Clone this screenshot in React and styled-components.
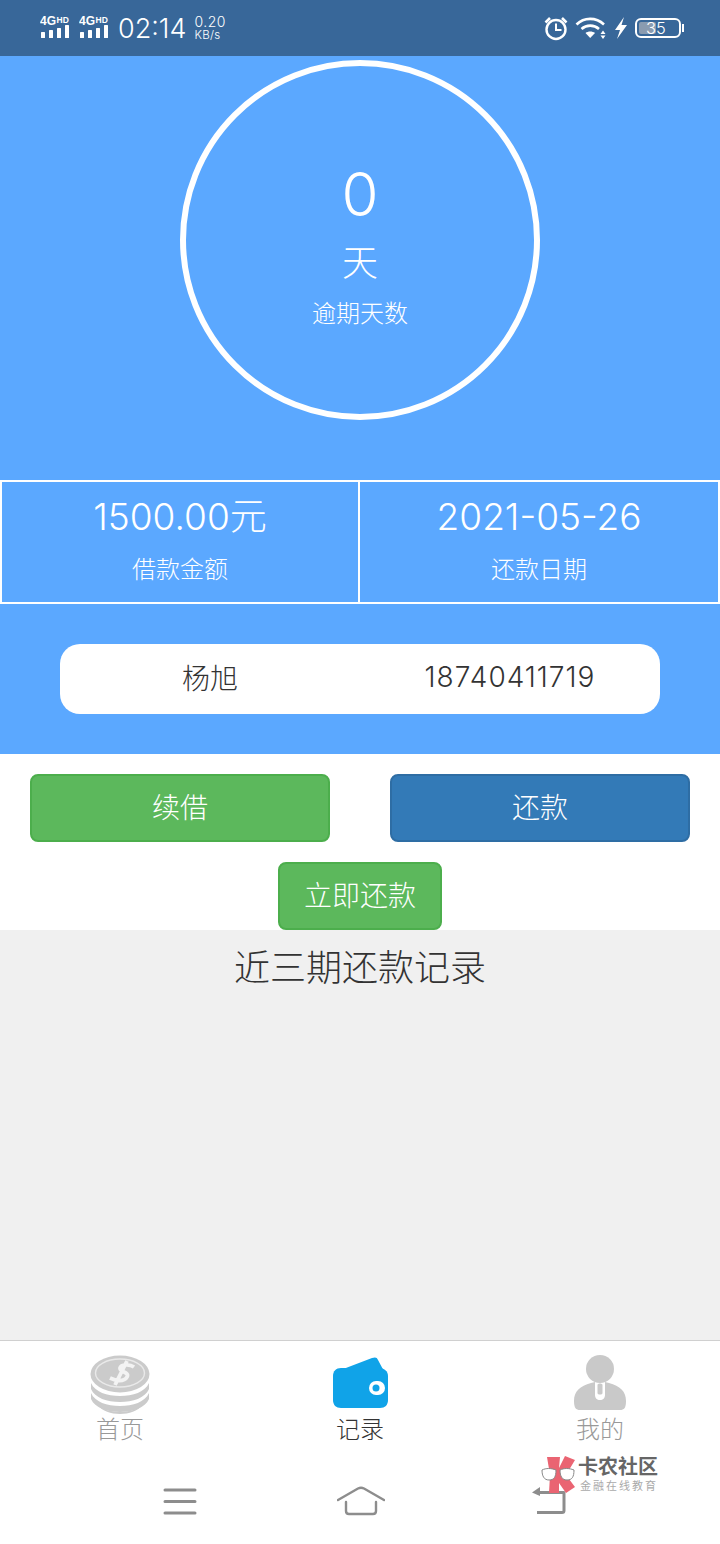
import React from "react";
import styled, { createGlobalStyle } from "styled-components";

const GlobalStyle = createGlobalStyle`
  html, body {
    margin: 0;
    padding: 0;
    background: #fff;
    font-family: Inter, "Noto Sans CJK SC", sans-serif;
  }
  * { box-sizing: border-box; }
`;

function SignalIcon() {
  return (
    <svg width="31" height="26" viewBox="0 0 31 26">
      <text x="0" y="10" fill="#fff" fontSize="12" fontWeight="700" fontFamily="Liberation Sans, sans-serif">4G</text>
      <text x="16.500" y="7.500" fill="#fff" fontSize="8.500" fontWeight="700" fontFamily="Liberation Sans, sans-serif">HD</text>
      <rect x="1" y="17" width="4" height="6" rx="0.500" fill="#fff" />
      <rect x="9" y="15" width="4" height="8" rx="0.500" fill="#fff" />
      <rect x="17" y="13" width="4" height="10" rx="0.500" fill="#fff" />
      <rect x="25" y="10" width="4" height="13" rx="0.500" fill="#fff" />
    </svg>
  );
}

function AlarmIcon() {
  return (
    <svg width="26" height="26" viewBox="0 0 26 26" fill="none" stroke="#fff">
      <circle cx="13" cy="14.500" r="9.500" strokeWidth="2.400" />
      <path d="M13 8.500v6.500h5.500" strokeWidth="2" />
      <path d="M2.500 7.500 7 3M23.500 7.500 19 3" strokeWidth="2.600" />
    </svg>
  );
}

function WifiIcon() {
  return (
    <svg width="33" height="24" viewBox="0 0 33 24" fill="none" stroke="#fff" strokeWidth="2.600">
      <path d="M1.500 8.500C9 1 21 1 29 8.500" />
      <path d="M6.500 13C11.500 8.500 19 8.500 24 13" />
      <path d="M15.200 22 10.500 17C13 15 17.500 15 20 17Z" fill="#fff" stroke="none" />
      <path d="M28 14.500 30.500 18h-5ZM28 23 30.500 19.500h-5Z" fill="#fff" stroke="none" />
    </svg>
  );
}

function BoltIcon() {
  return (
    <svg width="14" height="24" viewBox="0 0 14 24">
      <path d="M10 1 1 14h5l-3 9 10-14H7.500Z" fill="#fff" />
    </svg>
  );
}

function CoinsIcon() {
  return (
    <svg width="60" height="60" viewBox="0 0 60 60">
      <ellipse cx="30" cy="19" rx="29.500" ry="18.500" fill="#cbcbcb" />
      <ellipse cx="30" cy="18" rx="24.500" ry="14" fill="none" stroke="#e9e9e9" strokeWidth="1.400" />
      <path d="M1 28c4 9 16 13 29 13s25-4 29-13v6c-4 9-16 13-29 13S5 43 1 34Z" fill="#cbcbcb" />
      <path d="M1 38c4 9 16 13 29 13s25-4 29-13v6c-4 9-16 13-29 13S5 53 1 44Z" fill="#cbcbcb" />
      <path d="M8 50c6 5 14 7 22 7s16-2 22-7c-4 6-13 9-22 9S12 56 8 50Z" fill="#cbcbcb" />
      <path d="M44 12c-4-3-13-3-14 1s10 4 7 9-11 4-17 1M37 6 25 30" fill="none" stroke="#f3f3f3" strokeWidth="3.800" />
    </svg>
  );
}

function WalletIcon() {
  return (
    <svg width="56" height="54" viewBox="0 -2 56 54">
      <path d="M6 14 40 1c3-1 5-1 6 2l8 15Z" fill="#10a3e8" />
      <path d="M1 19c0-5 3-8 8-8h38c5 0 9 3 9 8v24c0 5-3 8-8 8H9c-5 0-8-3-8-8Z" fill="#10a3e8" />
      <rect x="37" y="24" width="16" height="14" rx="7" fill="#fff" />
      <circle cx="44" cy="31" r="3.500" fill="#10a3e8" />
    </svg>
  );
}

function PersonIcon() {
  return (
    <svg width="54" height="56" viewBox="0 0 54 56">
      <circle cx="27" cy="14" r="14" fill="#c9c9c9" />
      <path d="M1 46c0-10 6-15 17-18l4-1v13c0 3 2 5 5 5s5-2 5-5V27l4 1c11 3 17 8 17 18 0 7-2 9-6 9H7c-4 0-6-2-6-9Z" fill="#c9c9c9" />
      <path d="M24.500 30c0-2 5-2 5 0v8c0 2-5 2-5 0Z" fill="#c9c9c9" />
    </svg>
  );
}

function MenuIcon() {
  return (
    <svg width="34" height="28" viewBox="0 0 34 28" fill="none" stroke="#8d8d8d" strokeWidth="3" strokeLinecap="round">
      <path d="M2 3h30M2 14.500h30M2 26h30" />
    </svg>
  );
}

function HomeIcon() {
  return (
    <svg width="48" height="30" viewBox="0 0 48 30" fill="none" stroke="#8d8d8d" strokeWidth="2.400" strokeLinecap="round" strokeLinejoin="round">
      <path d="M1 14 21 2.500c2-1 4-1 6 0L47 14" />
      <path d="M9 16v9c0 2 1 3 3 3h24c2 0 3-1 3-3v-9" />
    </svg>
  );
}

function BackIcon() {
  return (
    <svg width="36" height="30" viewBox="0 0 36 30" fill="none" stroke="#8d8d8d" strokeWidth="3" strokeLinejoin="round">
      <path d="M8 6.500h25v18c0 1.500-.5 2-2 2H6" />
      <path d="M9 1 1 6.500 9 10Z" fill="#8d8d8d" stroke="none" />
    </svg>
  );
}

function LogoMark() {
  return (
    <svg width="36" height="40" viewBox="0 0 36 40">
      <path d="M7 2h13l-1 11 6-12 10 4-9 15 9 12-9 6-7-10v10H9l1-18Z" fill="#ea6472" />
      <path d="M2 15c4-2 9-2 14 0 0 7-2 10-7 10s-7-4-7-10ZM20 15c4-2 9-2 14 0 0 7-2 10-7 10s-7-4-7-10Z" fill="#fff" stroke="#888" strokeWidth="1" />
    </svg>
  );
}

export default function App() {
  return (
    <>
      <GlobalStyle />
      <Page>
        <StatusBar>
          <StatusGroup>
            <SignalIcon />
            <SignalIcon />
            <Clock>02:14</Clock>
            <Speed>
              <span>0.20</span>
              <SpeedUnit>KB/s</SpeedUnit>
            </Speed>
          </StatusGroup>
          <StatusRight>
            <AlarmIcon />
            <WifiIcon />
            <BoltIcon />
            <Battery>
              <BatteryFill />
              <BatteryText>35</BatteryText>
              <BatteryTip />
            </Battery>
          </StatusRight>
        </StatusBar>

        <BluePanel>
          <Circle>
            <DayCount>0</DayCount>
            <DayUnit>天</DayUnit>
            <DayLabel>逾期天数</DayLabel>
          </Circle>

          <StatsRow>
            <StatCell>
              <StatValue>1500.00元</StatValue>
              <StatLabel>借款金额</StatLabel>
            </StatCell>
            <StatCell>
              <StatValue>2021-05-26</StatValue>
              <StatLabel>还款日期</StatLabel>
            </StatCell>
          </StatsRow>

          <InfoPill>
            <InfoText>杨旭</InfoText>
            <InfoText $spaced>18740411719</InfoText>
          </InfoPill>
        </BluePanel>

        <ActionArea>
          <ActionRow>
            <ActionButton $color="#5cb85c" $border="#4cae4c">续借</ActionButton>
            <ActionButton $color="#337ab7" $border="#2e6da4">还款</ActionButton>
          </ActionRow>
          <PayButton>立即还款</PayButton>
        </ActionArea>

        <Records>
          <RecordsTitle>近三期还款记录</RecordsTitle>
        </Records>

        <TabBar>
          <Tab>
            <TabIcon><CoinsIcon /></TabIcon>
            <TabLabel>首页</TabLabel>
          </Tab>
          <Tab>
            <TabIcon><WalletIcon /></TabIcon>
            <TabLabel $active>记录</TabLabel>
          </Tab>
          <Tab>
            <TabIcon><PersonIcon /></TabIcon>
            <TabLabel>我的</TabLabel>
          </Tab>
        </TabBar>

        <NavBar>
          <MenuIcon />
          <HomeIcon />
          <BackIcon />
          <Watermark>
            <LogoMark />
            <WatermarkText>
              <WatermarkName>卡农社区</WatermarkName>
              <WatermarkSub>金融在线教育</WatermarkSub>
            </WatermarkText>
          </Watermark>
        </NavBar>
      </Page>
    </>
  );
}

const Page = styled.div`
  width: 720px;
  height: 1544px;
  display: flex;
  flex-direction: column;
  background: #fff;
  overflow: hidden;
`;

const StatusBar = styled.div`
  height: 56px;
  background: #386799;
  color: #fff;
  display: flex;
  align-items: center;
  justify-content: space-between;
  padding: 0 39px 0 40px;
`;

const StatusGroup = styled.div`
  display: flex;
  align-items: center;
  gap: 8px;
`;

const StatusRight = styled.div`
  display: flex;
  align-items: center;
  gap: 6px;
`;

const Clock = styled.span`
  font-size: 27px;
  font-weight: 300;
`;

const Speed = styled.div`
  display: flex;
  flex-direction: column;
  font-size: 14px;
  line-height: 14px;
  font-weight: 300;
  letter-spacing: 0.5px;
`;

const SpeedUnit = styled.span`
  font-size: 11.500px;
  line-height: 12px;
  letter-spacing: 0.3px;
`;

const Battery = styled.div`
  position: relative;
  width: 46px;
  height: 20px;
  border: 2px solid #fff;
  border-radius: 6px;
  display: flex;
  align-items: center;
  justify-content: center;
  padding-right: 4px;
  margin-left: 1px;
`;

const BatteryFill = styled.div`
  position: absolute;
  left: 2px;
  top: 2px;
  bottom: 2px;
  width: 17px;
  border-radius: 2px;
  background: #8a9bb0;
`;

const BatteryText = styled.span`
  position: relative;
  font-size: 16.500px;
  font-weight: 300;
`;

const BatteryTip = styled.div`
  position: absolute;
  right: -5px;
  top: 4px;
  width: 2px;
  height: 8px;
  background: #fff;
`;

const BluePanel = styled.div`
  height: 698px;
  background: #5ba8ff;
  color: #fff;
  display: flex;
  flex-direction: column;
  align-items: center;
  padding-top: 4px;
`;

const Circle = styled.div`
  width: 360px;
  height: 360px;
  border: 6px solid #fff;
  border-radius: 50%;
  display: flex;
  flex-direction: column;
  align-items: center;
  padding-top: 90px;
`;

const DayCount = styled.div`
  font-size: 60px;
  line-height: 76px;
  font-weight: 300;
`;

const DayUnit = styled.div`
  font-size: 36px;
  line-height: 52px;
  font-weight: 300;
  margin-top: 5px;
`;

const DayLabel = styled.div`
  font-size: 24px;
  line-height: 36px;
  font-weight: 300;
  margin-top: 7px;
`;

const StatsRow = styled.div`
  width: 100%;
  height: 124px;
  margin-top: 60px;
  display: grid;
  grid-template-columns: 360px 360px;
`;

const StatCell = styled.div`
  border: 2px solid #fff;
  & + & {
    border-left: 0;
  }
  display: flex;
  flex-direction: column;
  align-items: center;
  padding-top: 12px;
`;

const StatValue = styled.div`
  font-size: 37px;
  line-height: 46px;
  font-weight: 300;
`;

const StatLabel = styled.div`
  font-size: 24px;
  line-height: 36px;
  font-weight: 300;
  margin-top: 12px;
`;

const InfoPill = styled.div`
  width: 600px;
  height: 70px;
  margin-top: 40px;
  background: #fff;
  border-radius: 20px;
  display: grid;
  grid-template-columns: 300px 300px;
  align-items: center;
  justify-items: center;
`;

const InfoText = styled.div`
  font-size: 28px;
  font-weight: 300;
  color: #333;
  margin-top: -5px;
  letter-spacing: ${(p) => (p.$spaced ? "1px" : "0")};
`;

const ActionArea = styled.div`
  height: 176px;
  display: flex;
  flex-direction: column;
  align-items: center;
  padding-top: 20px;
`;

const ActionRow = styled.div`
  width: 660px;
  display: flex;
  justify-content: space-between;
`;

const ActionButton = styled.div`
  width: 300px;
  height: 68px;
  border: 2px solid ${(p) => p.$border};
  border-radius: 8px;
  background: ${(p) => p.$color};
  color: #fff;
  font-size: 28px;
  font-weight: 300;
  padding-bottom: 4px;
  display: flex;
  align-items: center;
  justify-content: center;
`;

const PayButton = styled(ActionButton).attrs({ $color: "#5cb85c", $border: "#4cae4c" })`
  width: 164px;
  margin-top: 20px;
`;

const Records = styled.div`
  height: 410px;
  background: #f0f0f0;
  display: flex;
  justify-content: center;
`;

const RecordsTitle = styled.h2`
  margin: 10px 0 0;
  font-size: 36px;
  line-height: 56px;
  font-weight: 300;
  color: #333;
`;

const TabBar = styled.div`
  height: 120px;
  border-top: 1px solid #d0d0d0;
  display: grid;
  grid-template-columns: repeat(3, 240px);
`;

const Tab = styled.div`
  display: flex;
  flex-direction: column;
  align-items: center;
`;

const TabIcon = styled.div`
  height: 60px;
  margin-top: 14px;
  display: flex;
  align-items: flex-start;
`;

const TabLabel = styled.div`
  font-size: 24px;
  line-height: 32px;
  font-weight: 300;
  margin-top: -1px;
  color: ${(p) => (p.$active ? "#333" : "#999")};
`;

const NavBar = styled.div`
  position: relative;
  flex: 1;
  display: grid;
  grid-template-columns: 174px 194px 36px;
  grid-template-rows: 82px;
  align-items: center;
  padding-left: 163px;
`;

const Watermark = styled.div`
  position: absolute;
  left: 540px;
  top: -5px;
  display: flex;
  align-items: flex-start;
  gap: 2px;
`;

const WatermarkText = styled.div`
  display: flex;
  flex-direction: column;
  padding-top: 1px;
`;

const WatermarkName = styled.span`
  font-size: 20px;
  line-height: 23px;
  font-weight: 700;
  color: #666;
`;

const WatermarkSub = styled.span`
  font-size: 11px;
  line-height: 14px;
  letter-spacing: 2px;
  margin-left: 2px;
  color: #aaa;
`;
